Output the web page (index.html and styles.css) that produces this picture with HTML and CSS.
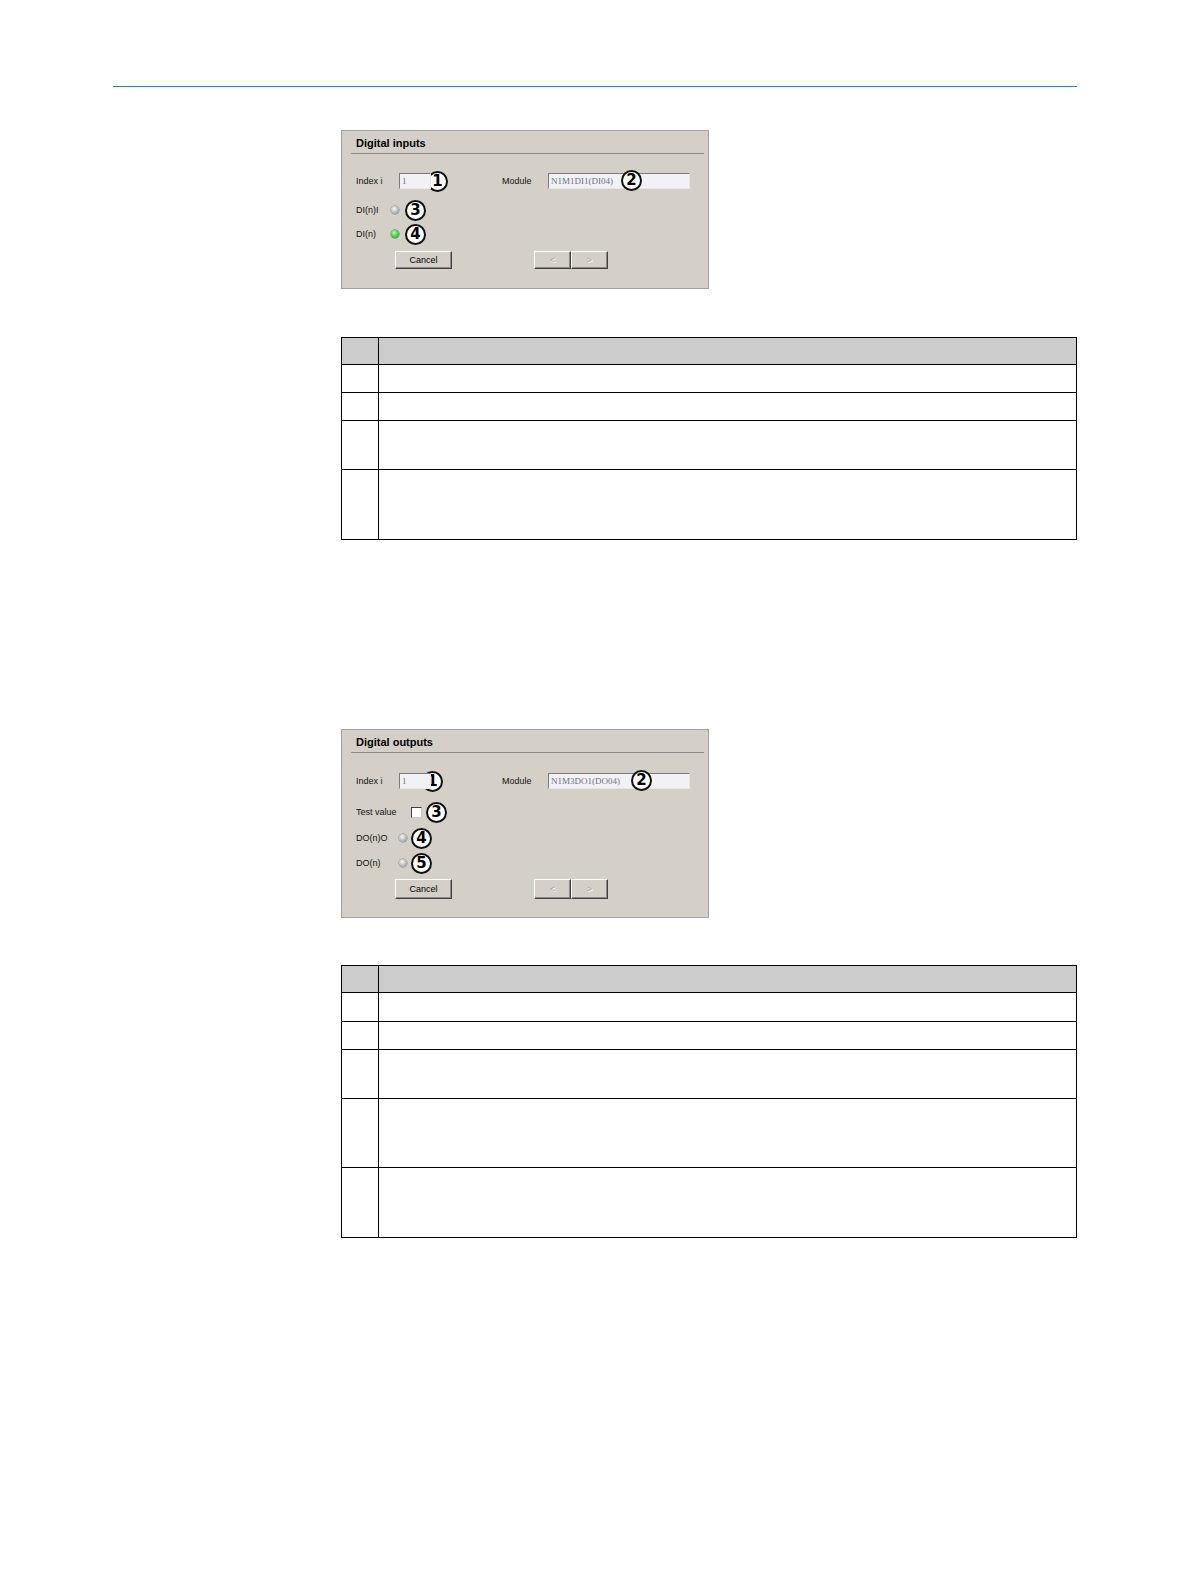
FILE: index.html
```html
<!DOCTYPE html>
<html lang="en">
<head>
<meta charset="utf-8">
<title>Digital inputs / outputs</title>
<link rel="stylesheet" href="styles.css">
</head>
<body>
<div class="page">
  <div class="rule"></div>
  <div class="content">

    <div class="dlg dlg-in">
      <div class="dlg-title">Digital inputs</div>
      <div class="row row-1">
        <div class="grp">
          <span class="lbl lbl-index">Index i</span>
          <span class="field f-index">1</span>
          <span class="badge badge-idx-in">1</span>
        </div>
        <span class="lbl lbl-module">Module</span>
        <span class="field f-module">N1M1DI1(DI04)<span class="badge badge-mod-in">2</span></span>
      </div>
      <div class="row gap-7">
        <span class="lbl lbl-di">DI(n)I</span>
        <span class="led"></span>
        <span class="badge badge-led-in">3</span>
      </div>
      <div class="row gap-2">
        <span class="lbl lbl-di">DI(n)</span>
        <span class="led led-on"></span>
        <span class="badge badge-led-in">4</span>
      </div>
      <div class="btnrow gap-6">
        <span class="btn btn-cancel">Cancel</span>
        <span class="btn btn-nav btn-prev">&lt;</span>
        <span class="btn btn-nav">&gt;</span>
      </div>
    </div>

    <table class="tbl tbl-in">
      <thead>
        <tr class="h27"><td class="c1"></td><td></td></tr>
      </thead>
      <tbody>
        <tr class="h28"><td class="c1"></td><td></td></tr>
        <tr class="h28"><td class="c1"></td><td></td></tr>
        <tr class="h49"><td class="c1"></td><td></td></tr>
        <tr class="h70"><td class="c1"></td><td></td></tr>
      </tbody>
    </table>

    <div class="dlg dlg-out">
      <div class="dlg-title">Digital outputs</div>
      <div class="row row-1">
        <div class="grp">
          <span class="lbl lbl-index">Index i</span>
          <span class="field f-index">1</span>
          <span class="badge badge-idx-out">1</span>
        </div>
        <span class="lbl lbl-module">Module</span>
        <span class="field f-module">N1M3DO1(DO04)<span class="badge badge-mod-out">2</span></span>
      </div>
      <div class="row gap-9">
        <span class="lbl lbl-test">Test value</span>
        <span class="chk"></span>
        <span class="badge badge-chk">3</span>
      </div>
      <div class="row gap-4">
        <span class="lbl lbl-do">DO(n)O</span>
        <span class="led"></span>
        <span class="badge badge-led-out">4</span>
      </div>
      <div class="row gap-3">
        <span class="lbl lbl-do">DO(n)</span>
        <span class="led"></span>
        <span class="badge badge-led-out">5</span>
      </div>
      <div class="btnrow btnrow-tall gap-5">
        <span class="btn btn-cancel">Cancel</span>
        <span class="btn btn-nav btn-prev">&lt;</span>
        <span class="btn btn-nav">&gt;</span>
      </div>
    </div>

    <table class="tbl tbl-out">
      <thead>
        <tr class="h27"><td class="c1"></td><td></td></tr>
      </thead>
      <tbody>
        <tr class="h29"><td class="c1"></td><td></td></tr>
        <tr class="h28"><td class="c1"></td><td></td></tr>
        <tr class="h49"><td class="c1"></td><td></td></tr>
        <tr class="h69"><td class="c1"></td><td></td></tr>
        <tr class="h70"><td class="c1"></td><td></td></tr>
      </tbody>
    </table>

  </div>
</div>
</body>
</html>
```

FILE: styles.css
```css
html, body {
  margin: 0;
  padding: 0;
  background: #ffffff;
}

body {
  width: 1191px;
  min-height: 1584px;
  font-family: "Liberation Sans", Arial, sans-serif;
  color: #000;
}

.page {
  padding-top: 86px;
}

.rule {
  margin-left: 113px;
  width: 964px;
  height: 0;
  border-top: 1px solid #0d92bd;
}

.content {
  margin-left: 341px;
}

/* ---------- dialog ---------- */
.dlg {
  box-sizing: border-box;
  width: 368px;
  border: 1px solid #a2a2a2;
  background: #d4d0c8;
  display: flex;
  flex-direction: column;
}

.dlg-in {
  margin-top: 43px;
  height: 159px;
}

.dlg-out {
  margin-top: 189px;
  height: 189px;
}

.dlg-title {
  box-sizing: border-box;
  height: 23px;
  margin: 0 4px 0 9px;
  padding: 1px 0 0 5px;
  line-height: 22px;
  font-size: 11px;
  font-weight: bold;
  color: #000;
  border-bottom: 1px solid #8c8c8c;
}

.row {
  display: flex;
  align-items: center;
  height: 22px;
  padding-left: 14px;
  font-size: 9px;
}

.row-1 {
  margin-top: 16px;
}

.dlg-out .row-1 {
  margin-top: 17px;
}

.gap-2 { margin-top: 2px; }
.gap-3 { margin-top: 3px; }
.gap-4 { margin-top: 4px; }
.gap-5 { margin-top: 5px; }
.gap-6 { margin-top: 6px; }
.gap-7 { margin-top: 7px; }
.gap-9 { margin-top: 9px; }

.grp {
  display: flex;
  align-items: center;
  width: 146px;
}

.lbl {
  white-space: nowrap;
  font-size: 9px;
  color: #111;
}

.lbl-index { width: 43px; }
.lbl-module { width: 46px; }
.lbl-di { width: 35px; }
.lbl-do { width: 43px; }
.lbl-test { width: 55px; }

.field {
  position: relative;
  box-sizing: border-box;
  height: 16px;
  padding-left: 2px;
  border: 1px solid;
  border-color: #7b7b7b #e6e6e6 #e6e6e6 #7b7b7b;
  background: #f1f1f6;
  font-family: "Liberation Serif", "Times New Roman", serif;
  font-size: 9px;
  line-height: 14px;
  color: #6f6f8c;
  white-space: nowrap;
}

.f-index { width: 32px; }
.f-module { width: 142px; }

/* ---------- callout badges ---------- */
.badge {
  box-sizing: border-box;
  flex: none;
  width: 21px;
  height: 21px;
  border: 2px solid #111;
  border-radius: 50%;
  background: #fff;
  display: flex;
  align-items: center;
  justify-content: center;
  font-family: "DejaVu Sans", sans-serif;
  font-weight: bold;
  font-size: 15px;
  line-height: 1;
  color: #000;
}

.field .badge {
  position: absolute;
  top: -4px;
}

.badge-idx-in { margin-left: -4px; }
.badge-idx-out { margin-left: -9px; }
.badge-mod-in { left: 72px; }
.badge-mod-out { left: 82px; }
.badge-led-in { margin-left: 6px; }
.badge-led-out { margin-left: 4px; }
.badge-chk { margin-left: 4px; }

/* ---------- indicators ---------- */
.led {
  flex: none;
  width: 8px;
  height: 8px;
  border-radius: 50%;
  background: radial-gradient(circle at 40% 35%, #f6f8f7 0%, #bfc4c2 45%, #868c8b 100%);
  box-shadow: 0 0 0 0.5px #7f8584;
}

.led-on {
  background: radial-gradient(circle at 40% 35%, #c6ffbe 0%, #4fd64a 45%, #1e9a1e 100%);
  box-shadow: 0 0 0 0.5px #2a8a2a;
}

.chk {
  flex: none;
  box-sizing: border-box;
  width: 11px;
  height: 11px;
  border: 1px solid;
  border-color: #404040 #c8c8c8 #c8c8c8 #404040;
  background: #fff;
}

/* ---------- buttons ---------- */
.btnrow {
  display: flex;
  align-items: stretch;
  height: 18px;
  padding-left: 53px;
}

.btnrow-tall {
  height: 20px;
}

.btn {
  box-sizing: border-box;
  display: flex;
  align-items: center;
  justify-content: center;
  border: 1px solid;
  border-color: #ffffff #404040 #404040 #ffffff;
  box-shadow: inset -1px -1px 0 #8a8a8a;
  background: #d4d0c8;
  font-size: 9px;
  color: #000;
}

.btn-cancel {
  width: 57px;
}

.btn-nav {
  width: 37px;
  color: #a6a6a6;
  text-shadow: 1px 1px 0 #ffffff;
}

.btn-prev {
  margin-left: 82px;
}

/* ---------- tables ---------- */
.tbl {
  border-collapse: collapse;
  width: 736px;
  table-layout: fixed;
}

.tbl-in {
  margin-top: 48px;
}

.tbl-out {
  margin-top: 47px;
}

.tbl td {
  border: 1px solid #000;
  padding: 0;
}

.tbl thead td {
  background: #cccccc;
}

.tbl .c1 {
  width: 36px;
}

.h27 { height: 27px; }
.h28 { height: 28px; }
.h29 { height: 29px; }
.h49 { height: 49px; }
.h69 { height: 69px; }
.h70 { height: 70px; }
```
